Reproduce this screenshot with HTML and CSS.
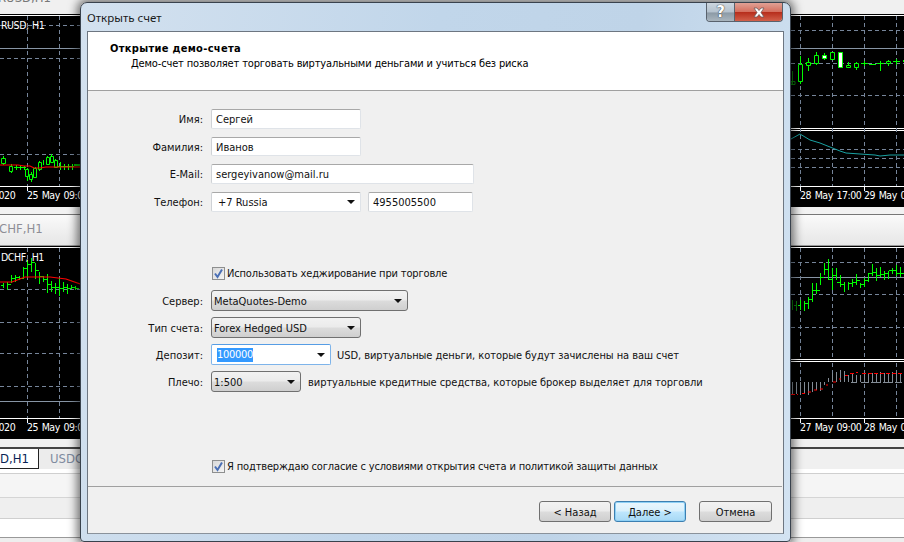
FILE: index.html
```html
<!DOCTYPE html>
<html lang="ru">
<head>
<meta charset="utf-8">
<title>Открыть счет</title>
<link rel="stylesheet" href="styles.css">
</head>
<body>
<div class="desktop">
  <div class="side side-left">
    <div class="topband"><span class="cut">EURUSD,H1</span></div>
    <svg class="chart" width="80" height="193" viewBox="0 14 80 193">
      <rect x="0" y="14" width="80" height="193" fill="#000"/>
      <path d="M0 15.500H80M0 186.500H80" stroke="#fff"/>
      <path d="M0 48.500H80" stroke="#8795a5"/>
      <path d="M27.500 16V186M59.500 16V186M0 25.500H80M0 58.500H80M0 154.500H80" stroke="#76859a" stroke-dasharray="4 3"/>
      <path d="M27.500 186V191" stroke="#fff"/>
      <path d="M3.500 156V165M11.500 164V173M16.500 165V170M20.500 165V170M24.500 166V170M27.500 168V181M31.500 172V182M35.500 167V178M39.500 161V171M43.500 160V165M47.500 156V164M51.500 154V163M55.500 159V168M60.500 162V170M64.500 164V170M68.500 164V170M72.500 164V170M14 167.500H26M58 166.500H74" stroke="#0f0" fill="none"/>
      <path d="M1.500 158.500h4v5h-4zM9.500 166.500h3v5h-3zM25.500 169.500h3v7h-3zM29.500 174.500h3v5h-3zM33.500 168.500h3v9h-3zM38.500 162.500h3v7h-3zM46.500 157.500h3v7h-3zM50.500 156.500h3v6h-3zM54.500 160.500h3v7h-3z" fill="#000" stroke="#0f0"/>
      <path d="M74 164h6v2h-6z" fill="#0a0"/>
      <path d="M0 165H18L24 166H30L34 168H40L46 167H80" fill="none" stroke="#f00" stroke-width="1.200"/>
      <text x="1" y="29" class="ctext">RUSD, H1</text>
      <text x="-7" y="199" class="ctext">2020</text>
      <text x="27" y="199" class="ctext">25 May 09:00</text>
    </svg>
    <div class="gap-strip"></div>
    <div class="tabtitle"><span class="muted">DCHF,H1</span></div>
    <svg class="chart" width="80" height="193" viewBox="0 246 80 193">
      <rect x="0" y="246" width="80" height="193" fill="#000"/>
      <path d="M0 247.500H80M0 418.500H80" stroke="#fff"/>
      <path d="M0 401.500H80" stroke="#8795a5"/>
      <path d="M27.500 248V418M59.500 248V418M0 289.500H80M0 322.500H80M0 353.500H80M0 386.500H80" stroke="#76859a" stroke-dasharray="4 3"/>
      <path d="M27.500 418V423" stroke="#fff"/>
      <path d="M3.500 283V288M7.500 282V290M11.500 275V283M15.500 275V282M19.500 276V280M23.500 267V279M27.500 260V277M31.500 258V272M35.500 263V279M39.500 272V284M43.500 276V282M47.500 274V293M51.500 281V292M55.500 283V294M59.500 278V296M63.500 282V292M67.500 284V294M71.500 285V289M75.500 286V290M1 285.500H3M8 284.500H11M12 278.500H15M16 277.500H19M20 278.500H23M24 268.500H27M28 264.500H31M32 262.500H35M36 270.500H39M40 276.500H43M44 279.500H47M48 284.500H51M52 287.500H55M56 287.500H59M60 288.500H63M64 287.500H67M68 288.500H71M72 287.500H75M76 288.500H79" stroke="#0f0" fill="none"/>
      <path d="M0 282H12L25 277H50L66 279L80 284" fill="none" stroke="#f00" stroke-width="1.200"/>
      <text x="1" y="261" class="ctext">DCHF, H1</text>
      <text x="-7" y="431" class="ctext">2020</text>
      <text x="27" y="431" class="ctext">25 May 09:00</text>
    </svg>
    <div class="gap-strip strip-low"></div>
    <div class="tabs">
      <span class="tab tab-on">D,H1</span>
      <span class="tab">USDC</span>
    </div>
    <div class="panels"></div>
  </div>

  <div class="side side-right">
    <div class="topband"></div>
    <svg class="chart" width="113" height="193" viewBox="791 14 113 193">
      <rect x="791" y="14" width="113" height="193" fill="#000"/>
      <path d="M791 15.500H904M791 186.500H904M791 128.500H904M791 130.500H904" stroke="#fff"/>
      <path d="M791 48.500H904" stroke="#8795a5"/>
      <path d="M800.500 16V186M832.500 16V186M864.500 16V186M896.500 16V186M791 30.500H904M791 63.500H904M791 95.500H904M791 149.500H904M791 158.500H904M791 167.500H904" stroke="#76859a" stroke-dasharray="4 3"/>
      <path d="M800.500 186V191M864.500 186V191" stroke="#fff"/>
      <path d="M792.500 71V85M791 81.500h4v3h-4z" fill="none" stroke="#0a7a0a"/>
      <path d="M800.500 56V84M808.500 58V71M816.500 52V65M824.500 53V60M832.500 52V60M840.500 52V68M848.500 62V68M856.500 62V70M864.500 61V66M880.500 61V71M888.500 60V66M896.500 59V65M903.500 60V62M805 63.500H812M861 63.500H868M869 64.500H876M877 63.500H884M893 61.500H900" stroke="#0f0" fill="none"/>
      <path d="M798.500 64.500h4v17h-4zM806.500 62.500h4v3h-4zM814.500 55.500h4v8h-4zM830.500 52.500h4v7h-4zM846.500 65.500h4v2h-4zM854.500 63.500h4v4h-4zM886.500 61.500h4v2h-4z" fill="#000" stroke="#0f0"/>
      <path d="M822.500 55.500h4v3h-4zM838.500 52.500h4v15h-4z" fill="#fff" stroke="#0f0"/>
      <path d="M791 139L800 134L810 140L820 143L830 147L840 151L846 153L860 154L875 155L880 156L890 155L904 155" fill="none" stroke="#1aa3a3"/>
      <text x="800" y="199" class="ctext">28 May 17:00</text>
      <text x="864" y="199" class="ctext">29 May 09:00</text>
    </svg>
    <div class="gap-strip"></div>
    <div class="tabtitle"></div>
    <svg class="chart" width="113" height="193" viewBox="791 246 113 193">
      <rect x="791" y="246" width="113" height="193" fill="#000"/>
      <path d="M791 247.500H904M791 418.500H904M791 359.500H904M791 361.500H904" stroke="#fff"/>
      <path d="M791 277.500H904" stroke="#8795a5"/>
      <path d="M800.500 248V359M832.500 248V359M864.500 248V359M896.500 248V359M800.500 363V418M832.500 363V418M864.500 363V418M896.500 363V418M791 262.500H904M791 294.500H904M791 327.500H904" stroke="#76859a" stroke-dasharray="4 3"/>
      <path d="M800.500 418V423M864.500 418V423" stroke="#fff"/>
      <path d="M792.500 300V310M796.500 301V311M794 305.500H796" stroke="#0a7a0a" fill="none"/>
      <path d="M800.500 300V310M804.500 301V311M808.500 297V309M812.500 283V302M816.500 283V294M820.500 273V285M824.500 263V275M828.500 259V280M832.500 268V290M836.500 268V280M840.500 275V287M844.500 282V292M848.500 282V290M852.500 279V287M856.500 274V285M860.500 283V288M864.500 278V287M868.500 273V282M872.500 264V276M876.500 268V281M880.500 267V277M884.500 271V280M888.500 271V279M892.500 268V274M896.500 265V276M900.500 267V277M798 305.500H800M805 303.500H808M809 299.500H812M813 290.500H816M817 290.500H820M821 277.500H824M825 269.500H828M829 279.500H832M833 275.500H836M837 282.500H840M841 284.500H844M849 283.500H852M853 282.500H856M857 280.500H860M861 284.500H864M865 280.500H868M869 273.500H872M873 272.500H876M877 275.500H880M881 274.500H884M885 273.500H888M889 270.500H892M893 270.500H896M897 273.500H904" stroke="#0f0" fill="none"/>
      <path d="M792.500 382V394M796.500 382V394M800.500 382V395M804.500 382V394M808.500 382V395M812.500 382V392M816.500 382V390M820.500 382V391M824.500 382V385M828.500 382V378M832.500 382V373M836.500 382V372M840.500 382V370M844.500 382V371M848.500 382V375M852.500 382V374M856.500 382V375M860.500 382V375M864.500 382V373M868.500 382V373M872.500 382V373M876.500 382V373M880.500 382V372M884.500 382V373M888.500 382V373M892.500 382V372M896.500 382V372M900.500 382V373M851 382.500H857M861 382.500H869M871 382.500H881M883 382.500H893M895 382.500H902" stroke="#838c96" fill="none"/>
      <path d="M791 394.500H798M802 393.500H805M808 392H811M814 390H817M820 389H823M826 385H828M833 382H836M839 379H841M845 375.500H848M850 373.500H854M856 372.500H858M862 373.500H904" fill="none" stroke="#f00" stroke-dasharray="4 2"/>
      <text x="800" y="431" class="ctext">27 May 09:00</text>
      <text x="864" y="431" class="ctext">28 May 09:00</text>
    </svg>
    <div class="gap-strip strip-low"></div>
    <div class="tabs"></div>
    <div class="panels"></div>
  </div>

  <section class="dialog">
    <header class="titlebar">
      <span class="title">Открыть счет</span>
      <div class="winbtns">
        <span class="winbtn help">?</span>
        <span class="winbtn close">
          <svg width="14" height="11" viewBox="0 0 14 11"><path d="M2 1h3l2 2.500L9 1h3L9 5.500 12 10H9L7 7.500 5 10H2L5 5.500z" fill="#fff" stroke="#6e5a5a" stroke-width=".8"/></svg>
        </span>
      </div>
    </header>
    <div class="client">
      <div class="head">
        <h1>Открытие демо-счета</h1>
        <p>Демо-счет позволяет торговать виртуальными деньгами и учиться без риска</p>
      </div>
      <form class="form">
        <div class="contact">
          <div class="row h20"><label>Имя:</label><span class="field w150">Сергей</span></div>
          <div class="row h19"><label>Фамилия:</label><span class="field w150">Иванов</span></div>
          <div class="row h20"><label>E-Mail:</label><span class="field w263">sergeyivanow@mail.ru</span></div>
          <div class="row h20"><label>Телефон:</label>
            <span class="field w150 combo"><span class="combo-text">+7 Russia</span><i class="arrow"></i></span>
            <span class="field w105 phone">4955005500</span>
          </div>
        </div>
        <div class="check hedge"><span class="box"><svg width="11" height="11" viewBox="0 0 11 11"><path d="M2 5.500L4.500 9 9 1.500" fill="none" stroke="#4a6fb5" stroke-width="2"/></svg></span><span class="check-text">Использовать хеджирование при торговле</span></div>
        <div class="account">
          <div class="row h21"><label>Сервер:</label><span class="select w197">MetaQuotes-Demo<i class="arrow"></i></span></div>
          <div class="row h21"><label>Тип счета:</label><span class="select w150">Forex Hedged USD<i class="arrow"></i></span></div>
          <div class="row h21"><label>Депозит:</label><span class="field w120 deposit"><span class="sel">100000</span><i class="arrow"></i></span><span class="note note-usd">USD, виртуальные деньги, которые будут зачислены на ваш счет</span></div>
          <div class="row h21"><label>Плечо:</label><span class="select w90">1:500<i class="arrow"></i></span><span class="note">виртуальные кредитные средства, которые брокер выделяет для торговли</span></div>
        </div>
        <div class="check agree"><span class="box"><svg width="11" height="11" viewBox="0 0 11 11"><path d="M2 5.500L4.500 9 9 1.500" fill="none" stroke="#4a6fb5" stroke-width="2"/></svg></span><span class="check-text">Я подтверждаю согласие с условиями открытия счета и политикой защиты данных</span></div>
      </form>
      <footer class="foot">
        <button type="button" class="btn">&lt; Назад</button>
        <button type="button" class="btn btn-def">Далее &gt;</button>
        <button type="button" class="btn btn-cancel">Отмена</button>
      </footer>
    </div>
  </section>
</div>
</body>
</html>
```
FILE: styles.css
```css
* { box-sizing: border-box; }
html, body { margin: 0; padding: 0; }
body { width: 904px; height: 542px; overflow: hidden; background: #f0f0f0; font-family: "DejaVu Sans Condensed", "DejaVu Sans", sans-serif; }
.desktop { position: relative; width: 904px; height: 542px; overflow: hidden; }

.side { position: absolute; top: 0; display: flex; flex-direction: column; height: 542px; overflow: hidden; }
.side-left { left: 0; width: 80px; }
.side-right { left: 791px; width: 113px; }
.topband { height: 14px; flex: none; background: #f0f0f0; overflow: hidden; }
.cut { display: block; margin: -10px 0 0 -18px; font: 13px "DejaVu Sans Condensed", sans-serif; color: #777; white-space: nowrap; }
.chart { display: block; flex: none; }
.ctext { font: 10.500px "DejaVu Sans Condensed", sans-serif; letter-spacing: -.45px; word-spacing: 1px; fill: #fff; }
.gap-strip { height: 8px; background: #f2f2f2; border-bottom: 1px solid #777; flex: none; }
.strip-low { height: 10px; border-bottom: 2px solid #444; background: #f0f0f0; }
.tabtitle { height: 31px; flex: none; background: linear-gradient(#fafafa, #e6e6e6); border-bottom: 1px solid #999; font: 13px/27px "DejaVu Sans Condensed", sans-serif; overflow: hidden; white-space: nowrap; }
.muted { color: #8d8d96; margin-left: -10px; }
.tabs { display: flex; height: 20px; flex: none; font: 13px/19px "DejaVu Sans Condensed", sans-serif; }
.tab { width: 41px; padding-left: 11px; color: #7f8ba0; background: #ececec; overflow: hidden; white-space: nowrap; }
.tab-on { width: 39px; padding: 0 12px 0 0; color: #0a1f55; background: #fff; border-right: 1px solid #222; border-bottom: 1px solid #222; text-align: right; }
.panels { flex: 1; background: linear-gradient(#fff 0, #fff 4px, #cfcfcf 4px, #cfcfcf 5px, #f5f5f5 5px, #f5f5f5 28px, #d5d5d5 28px, #d5d5d5 29px, #efefef 29px, #efefef 49px, #cfcfcf 49px, #cfcfcf 50px, #fff 50px, #fff 68px, #999 68px, #999 69px, #eee 69px); }

.dialog { position: absolute; left: 80px; top: 2px; width: 711px; height: 540px; padding: 0 6px 7px; border: 1px solid #39424d; border-radius: 7px 7px 4px 4px; background: linear-gradient(100deg, #d3e1ef 0, #c1d6ea 45%, #bfd4e8 70%, #d3e3f2 100%); box-shadow: 0 0 10px 3px rgba(0,0,0,.55); display: flex; flex-direction: column; }
.titlebar { height: 28px; display: flex; justify-content: space-between; flex: none; }
.title { font: 11.500px/28px "Noto Sans", sans-serif; color: #1a1a1a; margin-top: 1px; }
.winbtns { display: flex; height: 19px; margin-top: 0; margin-right: 1px; border: 1px solid #59626d; border-top: 0; border-radius: 0 0 4px 4px; overflow: hidden; }
.winbtn { display: flex; align-items: center; justify-content: center; }
.help { width: 28px; background: linear-gradient(#ccd6df 0, #b5c2ce 50%, #8c9aa6 55%, #a9b5be 100%); border-right: 1px solid #59626d; font: bold 15px "DejaVu Sans", sans-serif; color: #fff; text-shadow: 0 0 1px #333, 0 0 1px #333; }
.close { width: 47px; background: linear-gradient(#e0a195 0, #d5705f 48%, #b72e1c 52%, #d2604a 100%); }

.client { flex: 1; display: flex; flex-direction: column; background: #f0f0f0; border: 1px solid #6d7681; border-bottom-color: #8a929b; }
.head { height: 59px; flex: none; background: #fff; border-bottom: 1px solid #a0a0a0; padding: 10px 0 0 22px; color: #000; }
.head h1 { margin: 0; font: bold 11px/14px "DejaVu Sans Condensed", sans-serif; letter-spacing: .3px; }
.head p { margin: 1px 0 0 21px; font: 11px/14px "DejaVu Sans Condensed", sans-serif; letter-spacing: -.15px; }
.form { flex: 1; display: flex; flex-direction: column; font: 11px/14px "DejaVu Sans Condensed", sans-serif; color: #111; padding-top: 18px; }
.contact, .account { display: flex; flex-direction: column; }
.contact { gap: 8px; }
.account { gap: 6px; margin-top: 10px; }
.row { display: flex; align-items: stretch; }
.h19 { height: 19px; }
.h20 { height: 20px; }
.h21 { height: 21px; }
.row label { width: 115px; margin-right: 8px; padding-top: 2px; text-align: right; align-self: center; flex: none; }
.field { display: flex; align-items: center; background: #fff; border: 1px solid #dfe3e8; border-top-color: #a8a8a8; border-left-color: #cfd2d6; border-radius: 2px; padding: 2px 0 0 4px; flex: none; position: relative; }
.w150 { width: 150px; }
.w263 { width: 263px; }
.w105 { width: 105px; }
.w197 { width: 197px; }
.w120 { width: 120px; }
.w90 { width: 90px; }
.phone { margin-left: 7px; }
.combo .combo-text { padding-left: 2px; }
.arrow { position: absolute; right: 5px; top: 50%; margin-top: -2px; width: 0; height: 0; border: 4px solid transparent; border-top: 4px solid #111; border-bottom: 0; }
.select { display: flex; align-items: center; position: relative; flex: none; padding: 2px 0 0 2px; border: 1px solid #707070; border-radius: 3px; background: linear-gradient(#f2f2f2 0, #ebebeb 48%, #dcdcdc 52%, #cfcfcf 100%); }
.deposit { border: 1px solid #7eb4ea; border-top-color: #569de5; padding: 0 0 0 5px; }
.sel { background: #3399ff; color: #fff; letter-spacing: -.3px; }
.note { margin-left: 7px; padding-top: 2px; align-self: center; white-space: nowrap; letter-spacing: -.05px; }
.note-usd { margin-left: 6px; }
.check { display: flex; align-items: center; gap: 2px; margin-left: 124px; height: 14px; }
.check-text { padding-top: 2px; letter-spacing: -.15px; }
.hedge { margin-top: 54px; }
.agree { margin-top: 67px; }
.box { width: 13px; height: 13px; display: flex; align-items: center; justify-content: center; background: linear-gradient(135deg, #d8d8d8, #f4f4f4); border: 1px solid #8e8f8f; flex: none; }
.foot { height: 47px; flex: none; margin-right: 1px; border-top: 1px solid #a0a0a0; display: flex; align-items: flex-start; padding: 14px 0 0 451px; gap: 3px; }
.btn { height: 21px; width: 72px; padding: 2px 0 0; font: 11px "DejaVu Sans Condensed", sans-serif; color: #111; border: 1px solid #707070; border-radius: 3px; background: linear-gradient(#f2f2f2 0, #ebebeb 48%, #dcdcdc 52%, #cfcfcf 100%); }
.btn-def { border-color: #3c7fb1; background: linear-gradient(#eaf6fd 0, #d9f0fc 48%, #bee6fd 52%, #a7d9f5 100%); box-shadow: inset 0 0 0 1px #8ed0f5; }
.btn-cancel { width: 73px; margin-left: 10px; }
```
